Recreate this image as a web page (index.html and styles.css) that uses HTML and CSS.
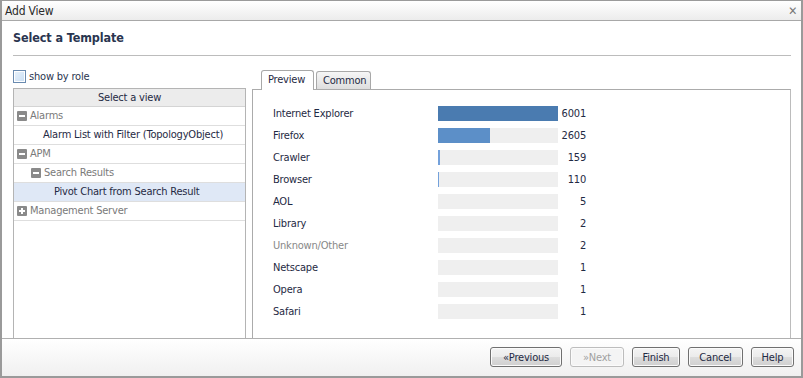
FILE: index.html
```html
<!DOCTYPE html>
<html>
<head>
<meta charset="utf-8">
<link rel="stylesheet" href="styles.css">
</head>
<body>
<div class="window">
  <div class="titlebar">
    <span class="title">Add View</span>
    <span class="close">&#x2715;</span>
  </div>
  <div class="content">
    <h1 class="heading">Select a Template</h1>
    <div class="rule"></div>
    <div class="main">
      <div class="leftcol">
        <label class="check"><span class="box"></span>show by role</label>
        <div class="tree">
          <div class="tree-head">Select a view</div>
          <div class="row group"><span class="tg minus"></span>Alarms</div>
          <div class="row leaf l1">Alarm List with Filter (TopologyObject)</div>
          <div class="row group"><span class="tg minus"></span>APM</div>
          <div class="row group l1g"><span class="tg minus"></span>Search Results</div>
          <div class="row leaf l2 sel">Pivot Chart from Search Result</div>
          <div class="row group"><span class="tg plus"></span>Management Server</div>
        </div>
      </div>
      <div class="rightcol">
        <div class="tabs">
          <div class="tab active">Preview</div>
          <div class="tab">Common</div>
        </div>
        <div class="panel">
          <div class="chart">
            <div class="crow"><span class="lbl">Internet Explorer</span><span class="bar"><span class="fill f1" style="width:120px"></span></span><span class="val">6001</span></div>
            <div class="crow"><span class="lbl">Firefox</span><span class="bar"><span class="fill f2" style="width:52px"></span></span><span class="val">2605</span></div>
            <div class="crow"><span class="lbl">Crawler</span><span class="bar"><span class="fill f3" style="width:2px"></span></span><span class="val">159</span></div>
            <div class="crow"><span class="lbl">Browser</span><span class="bar"><span class="fill f3" style="width:1px"></span></span><span class="val">110</span></div>
            <div class="crow"><span class="lbl">AOL</span><span class="bar"></span><span class="val">5</span></div>
            <div class="crow"><span class="lbl">Library</span><span class="bar"></span><span class="val">2</span></div>
            <div class="crow"><span class="lbl muted">Unknown/Other</span><span class="bar"></span><span class="val">2</span></div>
            <div class="crow"><span class="lbl">Netscape</span><span class="bar"></span><span class="val">1</span></div>
            <div class="crow"><span class="lbl">Opera</span><span class="bar"></span><span class="val">1</span></div>
            <div class="crow"><span class="lbl">Safari</span><span class="bar"></span><span class="val">1</span></div>
          </div>
        </div>
      </div>
    </div>
  </div>
  <div class="footer">
    <button class="btn w72">&laquo;Previous</button>
    <button class="btn w54 disabled">&raquo;Next</button>
    <button class="btn w48">Finish</button>
    <button class="btn w55">Cancel</button>
    <button class="btn w43">Help</button>
  </div>
</div>
</body>
</html>
```

FILE: styles.css
```css
* { box-sizing: border-box; }
html, body { margin: 0; padding: 0; background: #fff; }
body {
  font-family: "DejaVu Sans Condensed", "DejaVu Sans", sans-serif;
  font-size: 11px;
  letter-spacing: -0.2px;
  color: #1f2a44;
}
.window {
  width: 803px;
  height: 378px;
  border: 1px solid #9a9a9a;
  border-left-width: 2px;
  border-right-width: 2px;
  border-bottom-width: 2px;
  display: flex;
  flex-direction: column;
  overflow: hidden;
}
.titlebar {
  height: 20px;
  flex: none;
  background: linear-gradient(#ffffff, #ececec);
  border-bottom: 1px solid #a8a8a8;
  display: flex;
  align-items: center;
  justify-content: space-between;
  padding: 0 4px 0 3px;
}
.title { font-size: 12px; color: #2a2a2a; }
.close { font-size: 12px; color: #777; font-weight: bold; margin-top: 1px; }
.content {
  flex: 1;
  padding: 0 10px 0 11px;
  display: flex;
  flex-direction: column;
  min-height: 0;
}
.heading {
  margin: 9px 0 0 0;
  font-size: 12.5px;
  font-weight: bold;
  color: #2a3550;
  line-height: 16px;
  letter-spacing: -0.1px;
}
.rule {
  margin-top: 9px;
  height: 1px;
  background: #bcbcbc;
}
.main {
  flex: 1;
  display: flex;
  gap: 6px;
  margin-top: 12px;
  min-height: 0;
}
.leftcol { width: 233px; display: flex; flex-direction: column; }
.check { display: flex; align-items: center; height: 14px; margin-top: 1px; color: #2a3550; }
.box {
  width: 13px; height: 13px;
  border: 1px solid #6a8bb0;
  background: linear-gradient(135deg, #e8f2fc, #c9def3);
  margin-right: 3px;
  box-shadow: inset 0 0 0 1px #fff;
}
.tree {
  flex: 1;
  margin-top: 5px;
  border: 1px solid #b4b4b4;
  border-bottom: none;
}
.tree-head {
  height: 18px;
  background: #ececec;
  border-bottom: 1px solid #d4d4d4;
  text-align: center;
  line-height: 17px;
  color: #1f2a44;
}
.row {
  height: 19px;
  line-height: 18px;
  border-bottom: 1px solid #dedede;
  display: flex;
  align-items: center;
  white-space: nowrap;
}
.group { color: #7a7a7a; padding-left: 3px; }
.l1g { padding-left: 17px; }
.leaf.l1 { padding-left: 29px; }
.leaf.l2 { padding-left: 40px; }
.sel { background: #dfe8f6; }
.tg {
  width: 10px; height: 10px;
  background: #8a8a8a;
  margin-right: 3px;
  position: relative;
  flex: none;
  border-radius: 1px;
}
.tg::before {
  content: ""; position: absolute; left: 2px; top: 4px; width: 6px; height: 2px; background: #fff;
}
.plus::after {
  content: ""; position: absolute; left: 4px; top: 2px; width: 2px; height: 6px; background: #fff;
}
.rightcol { flex: 1; display: flex; flex-direction: column; }
.tabs { display: flex; gap: 2px; padding-left: 9px; height: 20px; align-items: flex-end; margin-top: 1px; }
.tab {
  height: 18px;
  border: 1px solid #a8a8a8;
  border-bottom: none;
  border-radius: 3px 3px 0 0;
  padding: 0 6px;
  line-height: 17px;
  background: linear-gradient(#f6f6f6, #dedede);
  color: #1f2a44;
}
.tab.active {
  height: 20px;
  background: #fff;
  line-height: 18px;
  margin-bottom: -1px;
  position: relative;
  width: 53px;
}
.tab:not(.active) { width: 55px; }
.panel {
  flex: 1;
  border: 1px solid #ababab;
  border-bottom: none;
  border-right-color: #bcbcbc;
  padding: 16px 0 0 20px;
}
.chart { display: flex; flex-direction: column; gap: 7px; }
.crow { display: flex; align-items: center; height: 15px; }
.lbl { width: 165px; color: #1f2a44; }
.muted { color: #888; }
.bar { width: 120px; height: 15px; background: #efefef; display: flex; }
.fill { height: 15px; display: block; }
.f1 { background: #4a7bb0; }
.f2 { background: #5c8fc8; }
.f3 { background: #74a1db; }
.val { width: 28px; text-align: right; }
.footer {
  height: 38px;
  flex: none;
  border-top: 1px solid #b0b0b0;
  background: linear-gradient(#ffffff, #f0f0f0);
  display: flex;
  justify-content: flex-end;
  align-items: center;
  gap: 8px;
  padding-right: 7px;
  padding-bottom: 1px;
}
.btn {
  height: 20px;
  font-family: inherit;
  font-size: 11px;
  letter-spacing: -0.2px;
  color: #1f2a44;
  border: 1px solid #707070;
  border-radius: 3px;
  background: linear-gradient(#f4f4f4 0%, #ebebeb 50%, #dddddd 51%, #cfcfcf 100%);
  box-shadow: inset 0 0 0 1px #fbfbfb;
  padding: 0;
}
.btn.disabled { color: #a0a0a0; border-color: #bdbdbd; background: #f4f4f4; }
.w72 { width: 72px; }
.w54 { width: 54px; }
.w48 { width: 48px; }
.w55 { width: 55px; }
.w43 { width: 43px; }
```
